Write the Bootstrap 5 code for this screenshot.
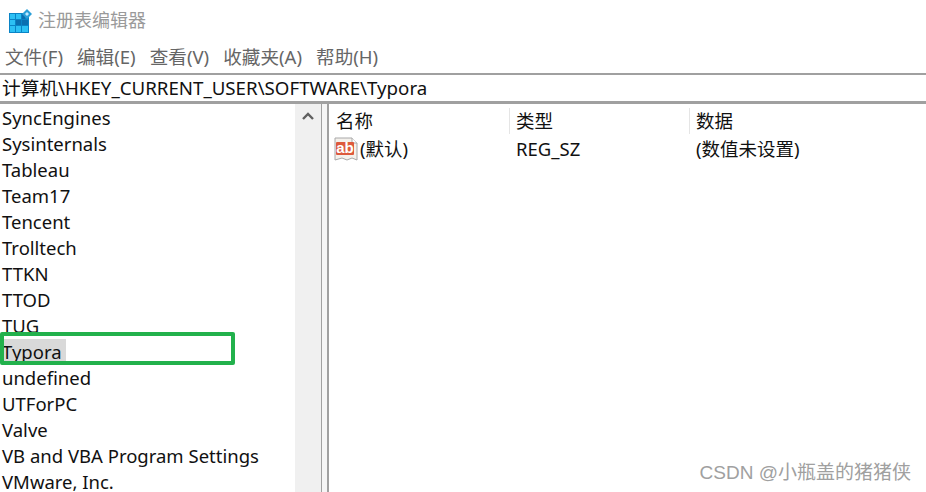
<!DOCTYPE html>
<html lang="zh">
<head>
<meta charset="utf-8">
<title>注册表编辑器</title>
<link rel="stylesheet" href="https://cdn.jsdelivr.net/npm/bootstrap@5.3.0/dist/css/bootstrap.min.css">
<style>
html,body{height:492px;overflow:hidden;background:#fff}
body{font-family:"Noto Sans","Noto Sans CJK SC",sans-serif;color:#111;font-size:18.5px}
.reg-shell{height:492px}
.reg-title{height:44px;flex:none;padding-left:9px;gap:6px;color:#9a9a9a;font-size:18px;padding-bottom:3px}
.reg-menu{height:29px;flex:none;line-height:1.2;padding-left:5px;gap:14px;color:#666;font-size:18.6px;padding-bottom:2px}
.reg-addr{height:31px;flex:none;border-top:2px solid #a0a0a0;border-bottom:3px solid #a0a0a0;padding-left:2px;font-size:18.7px;line-height:1.2;color:#111}
.reg-body{min-height:0}
.reg-tree{width:295px;padding:1px 0 0 2px;position:relative}
.reg-node{height:26px;line-height:26px;white-space:nowrap}
.reg-sel{position:relative}
.reg-sel span{background:#d9d9d9;display:inline-block;height:22px;line-height:26px;margin-left:-1px;padding-left:1px;padding-right:4px;vertical-align:top}
.reg-mark{position:absolute;left:-2px;top:-7px;width:235px;height:33px;border:4px solid #22b14c;border-radius:2px}
.reg-scroll{width:26px;background:#f0f0f0;padding-top:8px}
.reg-split{width:8px;border-left:1px solid #a0a0a0;border-right:2px solid #a0a0a0;background:#f5f5f5}
.reg-list{min-width:0;padding-top:4px}
.reg-head{height:26px;line-height:26px}
.reg-cname{width:181px;padding-left:7px;border-right:1px solid #e5e5e5}
.reg-ctype{width:180px;padding-left:6px;border-right:1px solid #e5e5e5}
.reg-cdata{padding-left:6px}
.reg-row{height:29px;line-height:29px}
.reg-row .reg-cname,.reg-row .reg-ctype{border-right:0}
.reg-row .reg-cname{padding-left:5px;gap:2px}
.reg-stamp{position:absolute;right:15px;bottom:5px;font-family:"Liberation Sans","Noto Sans CJK SC",sans-serif;font-size:19px;color:#a0a0a0}
</style>
</head>
<body>
<div class="reg-shell d-flex flex-column position-relative">
  <div class="reg-title d-flex align-items-center">
    <svg width="23" height="24" viewBox="0 0 23 24">
      <rect x="0" y="4" width="20" height="20" fill="#0a84c6"/>
      <g fill="#2cc0f4"><rect x="1" y="5" width="5" height="5"/><rect x="7" y="5" width="5" height="5"/><rect x="1" y="11" width="5" height="5"/><rect x="1" y="17" width="5" height="6"/><rect x="7" y="17" width="5" height="6"/><rect x="13" y="17" width="6" height="6"/></g>
      <g fill="#0b6fb0"><rect x="7" y="11" width="5" height="5"/><rect x="13" y="11" width="6" height="5"/><rect x="13" y="5" width="3" height="5"/></g>
      <path d="M18 0l5 5-5 5-5-5z" fill="#2a9fd8"/><path d="M18 3l2 2-2 2-2-2z" fill="#bfeaff"/>
    </svg>
    <span>注册表编辑器</span>
  </div>
  <div class="reg-menu d-flex align-items-center">
    <span>文件(F)</span><span>编辑(E)</span><span>查看(V)</span><span>收藏夹(A)</span><span>帮助(H)</span>
  </div>
  <div class="reg-addr d-flex align-items-center">计算机\HKEY_CURRENT_USER\SOFTWARE\Typora</div>
  <div class="reg-body d-flex flex-grow-1">
    <div class="reg-tree overflow-hidden">
      <div class="reg-node">SyncEngines</div>
      <div class="reg-node">Sysinternals</div>
      <div class="reg-node">Tableau</div>
      <div class="reg-node">Team17</div>
      <div class="reg-node">Tencent</div>
      <div class="reg-node">Trolltech</div>
      <div class="reg-node">TTKN</div>
      <div class="reg-node">TTOD</div>
      <div class="reg-node">TUG</div>
      <div class="reg-node reg-sel"><span>Typora</span><div class="reg-mark"></div></div>
      <div class="reg-node">undefined</div>
      <div class="reg-node">UTForPC</div>
      <div class="reg-node">Valve</div>
      <div class="reg-node">VB and VBA Program Settings</div>
      <div class="reg-node">VMware, Inc.</div>
    </div>
    <div class="reg-scroll d-flex justify-content-center align-items-start">
      <svg width="12" height="8" viewBox="0 0 12 8"><path d="M1 7l5-5 5 5" fill="none" stroke="#606060" stroke-width="2.4"/></svg>
    </div>
    <div class="reg-split"></div>
    <div class="reg-list flex-grow-1">
      <div class="reg-head d-flex">
        <div class="reg-cname">名称</div><div class="reg-ctype">类型</div><div class="reg-cdata">数据</div>
      </div>
      <div class="reg-row d-flex">
        <div class="reg-cname d-flex align-items-center">
          <svg width="24" height="24" viewBox="0 0 24 24">
            <path d="M1 1h17l5 5v17l-5-2-5 2-5-2-7 2z" fill="#f4f1ec" stroke="#a8a8a8"/>
            <path d="M18 1v5h5" fill="#fff" stroke="#a8a8a8"/>
            <rect x="2" y="5" width="18" height="13" rx="1" fill="#dd5a3c"/>
            <text x="11" y="16" text-anchor="middle" font-family="Liberation Sans" font-weight="700" font-size="15" fill="#fff">ab</text>
          </svg>
          <span>(默认)</span>
        </div>
        <div class="reg-ctype">REG_SZ</div>
        <div class="reg-cdata">(数值未设置)</div>
      </div>
    </div>
  </div>
  <div class="reg-stamp">CSDN @小瓶盖的猪猪侠</div>
</div>
<script src="https://cdn.jsdelivr.net/npm/bootstrap@5.3.0/dist/js/bootstrap.bundle.min.js"></script>
</body>
</html>
